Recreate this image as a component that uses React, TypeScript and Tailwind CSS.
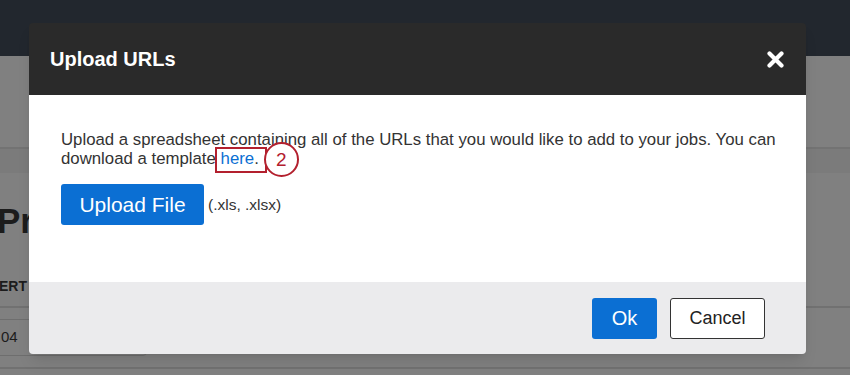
export default function App() {
  return (
    <div className="relative h-[375px] w-[850px] overflow-hidden bg-[#808080] font-['Liberation_Sans',Arial,sans-serif]">
      {/* page behind the dimmed overlay */}
      <div className="h-[56px] bg-[#22272e]" />
      <div className="h-[91px]" />
      <div className="h-[26px] border-t-2 border-[#737373] bg-[#7b7b7b]" />
      <div className="pt-[30px]">
        <div className="-ml-[3px] text-[35px] font-bold leading-none text-[#1c1c1c]">Projects</div>
        <div className="mt-[41px] -ml-[1px] text-[14px] font-bold leading-none text-[#1c1c1c]">ERT</div>
        <div className="mt-[13px] border-t-2 border-[#717171]" />
        <div className="mt-[11px] -ml-[10px] flex h-[37px] w-[157px] items-center rounded-[4px] border border-[#6e6e6e] pl-[10px] text-[15px] text-[#1c1c1c]">
          04
        </div>
        <div className="mt-[11px] border-t-2 border-[#717171]" />
      </div>

      {/* modal */}
      <div className="absolute left-[29px] top-[23px] w-[777px] overflow-hidden rounded-[4px] shadow-lg">
        <div className="flex h-[72px] items-center justify-between bg-[#2a2a2a] pl-[21px] pr-[22px]">
          <h2 className="text-[20px] font-bold text-white">Upload URLs</h2>
          <svg width="17" height="17" viewBox="0 0 17 17" aria-label="Close">
            <path d="M2.5 2.5 L14.5 14.5 M14.5 2.5 L2.5 14.5" stroke="#fff" strokeWidth="4.2" strokeLinecap="round" />
          </svg>
        </div>

        <div className="h-[187px] bg-white pl-[32px] pr-[20px] pt-[35px]">
          <p className="text-[16.8px] leading-[19px] text-[#333]">
            Upload a spreadsheet containing all of the URLs that you would like to add to your jobs. You can download a template{" "}
            <span className="relative">
              <a className="text-[#0b6fd3]">here</a>.
              <span className="absolute -left-[6px] -right-[8px] -top-[2px] h-[26px] border-[2.5px] border-[#b3202e]" />
              <span className="absolute left-full -top-[7px] ml-[5px] flex h-[35px] w-[35px] items-center justify-center rounded-full border-[2.5px] border-[#b3202e] bg-white text-[19px] text-[#b3202e]">
                2
              </span>
            </span>
          </p>
          <div className="mt-[16px] flex items-center gap-[4px]">
            <button className="h-[41px] w-[143px] rounded-[3px] bg-[#0b6fd3] text-[21px] text-white">Upload File</button>
            <span className="text-[15.5px] text-[#333]">(.xls, .xlsx)</span>
          </div>
        </div>

        <div className="flex h-[72px] items-center justify-end gap-[13px] bg-[#ebebed] pr-[41px]">
          <button className="h-[41px] w-[65px] rounded-[3px] bg-[#0b6fd3] text-[20px] text-white">Ok</button>
          <button className="h-[41px] w-[95px] rounded-[3px] border border-[#333] bg-white text-[18px] text-[#222]">Cancel</button>
        </div>
      </div>
    </div>
  );
}
